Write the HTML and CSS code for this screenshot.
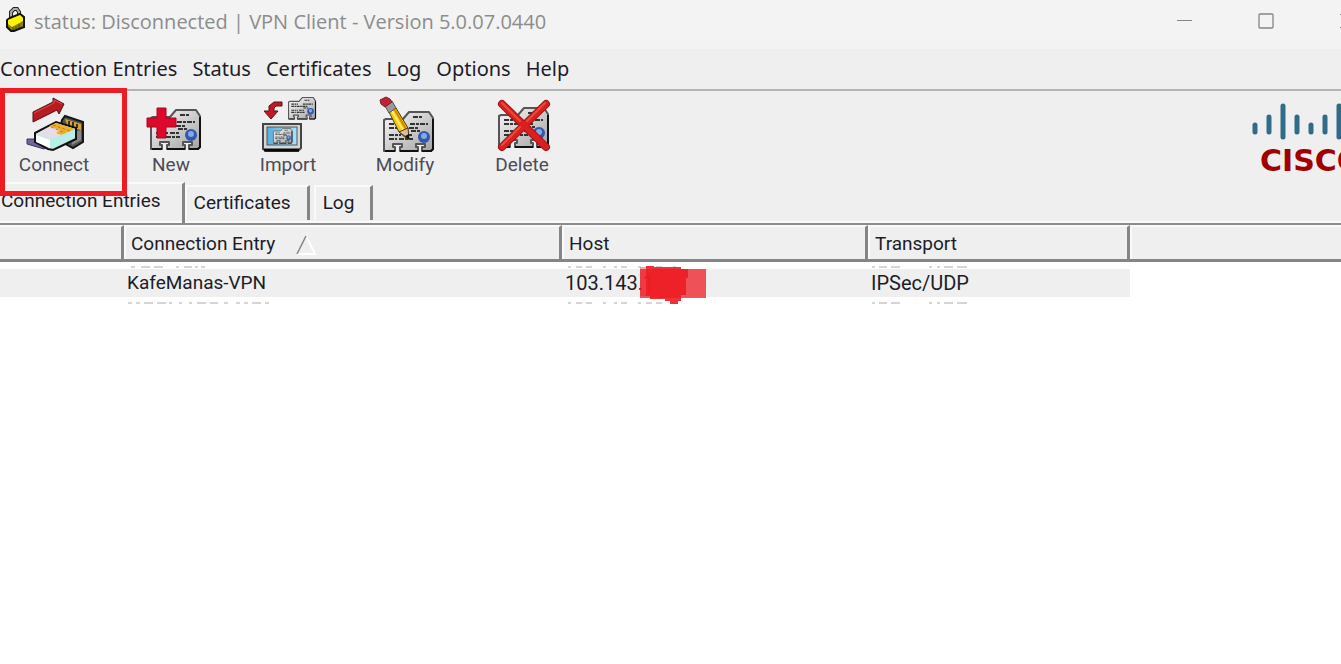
FILE: index.html
```html
<!DOCTYPE html>
<html lang="en">
<head>
  <meta charset="UTF-8" />
  <meta name="viewport" content="width=device-width, initial-scale=1.0" />
  <title>VPN Client</title>
  <link rel="stylesheet" href="styles.css">
</head>
<body>

  <!-- Shared shapes -->
  <svg class="defs" width="0" height="0">
    <defs>
      <linearGradient id="paper" x1="0" y1="0" x2="1" y2="1">
        <stop offset="0" stop-color="#fafafa" />
        <stop offset="1" stop-color="#a2a2a2" />
      </linearGradient>
      <linearGradient id="screen">
        <stop offset="0" stop-color="#55aee0" />
        <stop offset="1" stop-color="#a8e2fa" />
      </linearGradient>
      <g id="card">
        <path d="M1 9L3 8H20L26 1H46L50 7V38L48 40H39V36H42V33H33V36H35V40H17V36H19V33H10V36H12V40H1Z" fill="url(#paper)" stroke="#555" stroke-width="2" stroke-linejoin="round" />
        <path d="M50 8V38L48 40H39M35 40H17M12 40H2" fill="none" stroke="#111" stroke-width="2" />
        <path d="M30 6H39M6 13H18M27 13H45M6 17H35M28 20H37M6 24H18M20 24H30M6 28H14M16 28H30" fill="none" stroke="#333" stroke-width="2" stroke-dasharray="5 1 3 1" />
        <circle cx="41" cy="26" r="6" fill="#3158b0" />
        <circle cx="41" cy="25" r="3" fill="#86a8e4" />
      </g>
    </defs>
  </svg>

  <header class="titlebar">
    <svg class="lock" width="22" height="26" viewBox="0 0 22 26">
      <path d="M6 11V5L9 2H12L14 5V9" fill="none" stroke="#222" stroke-width="4" />
      <path d="M6 11V5L9 2H12L14 5V9" fill="none" stroke="#aaa" stroke-width="2" />
      <path d="M2 13L5 11L15 7L19 10V20L9 24H6L2 20Z" fill="#8a8400" stroke="#111" stroke-width="2" />
      <path d="M3 13L15 8L18 11V14L7 20L3 17Z" fill="#fff200" />
      <path d="M8 20V23M11 19V22M14 17V21" stroke="#4c4800" />
    </svg>
    <h1 class="window-title">status: Disconnected | VPN Client - Version 5.0.07.0440</h1>
    <div class="window-controls">
      <button aria-label="Minimize"><svg width="16" height="16"><path d="M0 7.5H15" stroke="#858585" /></svg></button>
      <button aria-label="Maximize"><svg width="16" height="16"><rect x="1" y="1" width="14" height="14" rx="1" fill="none" stroke="#858585" stroke-width="1.3" /></svg></button>
      <button aria-label="Close"><svg width="16" height="16"><path d="M1 1L15 15M15 1L1 15" stroke="#858585" /></svg></button>
    </div>
  </header>

  <nav class="menubar">
    <button>Connection Entries</button>
    <button>Status</button>
    <button>Certificates</button>
    <button>Log</button>
    <button>Options</button>
    <button>Help</button>
  </nav>

  <div class="toolbar">
    <button class="tool">
      <svg width="64" height="56" viewBox="0 0 64 56">
        <path d="M40 24L43 20L61 26V46L51 52L42 47L38 34Z" fill="#555" stroke="#161616" stroke-width="2" />
        <path d="M43 23L59 28V34L46 31Z" fill="#dda034" />
        <path d="M47 25V30M51 26V31M55 28V32" stroke="#333" stroke-width="2" />
        <path d="M49 37L59 34V44L50 49Z" fill="#888" />
        <path d="M5 43H17L28 49L22 53L5 48Z" fill="#70659d" stroke="#3f385f" />
        <path d="M13 37L34 26L54 32V43L31 54L26 53L13 46Z" fill="#b7eee6" stroke="#111" stroke-width="2" />
        <path d="M14 38L34 27L53 33L29 43Z" fill="#e8dce7" />
        <path d="M14 39L28 44V52L14 46Z" fill="#fff" />
        <path d="M27 30L34 27L53 33L39 39L34 37L38 34Z" fill="#f0ae26" />
        <path d="M31 29L48 35M29 31L43 37" stroke="#b97e15" stroke-dasharray="3 2" />
        <path d="M11 16L31 6V2L42 8L37 18L35 14L11 26Z" fill="#b81b20" stroke="#511115" stroke-width="1" />
        <path d="M12 17L32 7V4L40 8" fill="none" stroke="#e24b4b" stroke-width="1" />
      </svg>
      <span>Connect</span>
    </button>
    <button class="tool">
      <svg width="64" height="56" viewBox="0 0 64 56">
        <use href="#card" x="11" y="13" />
        <path d="M18 12H27V22H37V31H27V42H18V31H8V22H18Z" fill="#dc092b" stroke="#a60824" />
      </svg>
      <span>New</span>
    </button>
    <button class="tool">
      <svg width="64" height="56" viewBox="0 0 64 56">
        <path d="M26 6H18L13 10V15H8L15 23L22 15H18V12L20 10H26Z" fill="#c31824" stroke="#57121a" />
        <use href="#card" transform="translate(32 1) scale(.55)" />
        <path d="M7 28H45V52L42 55H10L7 53Z" fill="#d7d7d7" stroke="#444" stroke-width="2" />
        <path d="M8 54H43" stroke="#080808" stroke-width="3" />
        <rect x="11" y="31" width="30" height="18" fill="url(#screen)" stroke="#555" stroke-width="1" />
        <use href="#card" transform="translate(17 32) scale(.38)" />
      </svg>
      <span>Import</span>
    </button>
    <button class="tool">
      <svg width="64" height="56" viewBox="0 0 64 56">
        <use href="#card" x="10" y="15" />
        <path d="M16 16L23 12L35 32L34 43L26 36Z" fill="#f8c510" stroke="#4b3b0b" />
        <path d="M19 15L30 34" stroke="#fff064" stroke-width="2" />
        <path d="M22 14L33 33" stroke="#d38a00" stroke-width="2" />
        <path d="M26 36L35 32L36 43Z" fill="#e3bd91" stroke="#443728" />
        <path d="M32 40L36 38V44Z" fill="#111" />
        <path d="M12 10L19 5L23 12L16 17Z" fill="#999" stroke="#555" />
        <path d="M7 4L13 1L17 3L19 6L12 11L8 8Z" fill="#bd2437" stroke="#801c2a" />
      </svg>
      <span>Modify</span>
    </button>
    <button class="tool">
      <svg width="64" height="56" viewBox="0 0 64 56">
        <use href="#card" x="8" y="11" />
        <path d="M12 8L56 51M56 8L12 51" stroke="#9f1218" stroke-width="8" stroke-linecap="round" />
        <path d="M12 8L56 51M56 8L12 51" stroke="#d9201f" stroke-width="6" stroke-linecap="round" />
        <path d="M12 7L30 25M55 7L37 25M30 31L12 49" stroke="#ea4a3e" stroke-width="2" stroke-linecap="round" />
      </svg>
      <span>Delete</span>
    </button>

    <div class="brand">
      <svg width="120" height="38" viewBox="0 0 120 38">
        <path d="M3 22V29M17 14V29M31 3V34M45 14V29M59 22V29M73 14V29M87 3V34M101 14V29M115 22V29" stroke="#306c87" stroke-width="5" stroke-linecap="round" />
      </svg>
      <span>CISCO</span>
    </div>

    <div class="highlight"></div>
  </div>

  <div class="tabs" role="tablist">
    <button class="tab active" role="tab" aria-selected="true">Connection Entries</button>
    <button class="tab" role="tab">Certificates</button>
    <button class="tab" role="tab">Log</button>
  </div>

  <table class="entries">
    <colgroup>
      <col class="col-icon">
      <col class="col-name">
      <col class="col-host">
      <col class="col-transport">
      <col>
    </colgroup>
    <thead>
      <tr>
        <th></th>
        <th>Connection Entry
          <svg class="sort" width="20" height="20" viewBox="0 0 20 20"><path d="M1 19H19L10 1" fill="none" stroke="#fff" stroke-width="2" /><path d="M1 19L10 1" stroke="#858585" stroke-width="1.5" /></svg>
        </th>
        <th>Host</th>
        <th>Transport</th>
        <th></th>
      </tr>
    </thead>
    <tbody>
      <!-- rows scrolled almost out of sight -->
      <tr class="sliver">
        <td></td>
        <td><svg width="80" height="2"><path d="M4 1H80" stroke-dasharray="4 6 9 4 9 13 3 5 8 3 3 3" /></svg></td>
        <td><svg width="116" height="2"><path d="M3 1H116" stroke-dasharray="3 5 6 4 6 11 3 8 3 4 6 11" /></svg></td>
        <td><svg width="99" height="2"><path d="M1 1H99" stroke-dasharray="3 4 8 4 9 29 3 5 3 4 9 4 10 9" /></svg></td>
        <td></td>
      </tr>
      <tr class="row">
        <td></td>
        <td>KafeManas-VPN</td>
        <td class="host">103.143.1
          <svg class="scribble" width="68" height="40" viewBox="0 0 68 40">
            <path d="M1 4H67V33H1Z" fill="#ed1c24" opacity=".75" />
            <path d="M7 1H15V2H42V4H49V13H47V30H42V36H39V39H31V36H26V34H11V31H7Z" fill="#ed1c24" opacity=".9" />
            <path d="M1 2H7V31H1Z" fill="#ed1c24" opacity=".4" />
          </svg>
        </td>
        <td>IPSec/UDP</td>
        <td></td>
      </tr>
      <tr class="sliver last">
        <td></td>
        <td><svg width="142" height="2"><path d="M1 1H142" stroke-dasharray="4 4 4 4 9 4 9 3 3 7 3 7 3 5 9 4 8 6 4 8" /></svg></td>
        <td><svg width="116" height="2"><path d="M3 1H116" stroke-dasharray="3 5 6 4 6 11 3 8 3 4 6 11" /></svg></td>
        <td><svg width="99" height="2"><path d="M1 1H99" stroke-dasharray="3 4 8 4 9 29 3 5 3 4 9 4 10 9" /></svg></td>
        <td></td>
      </tr>
    </tbody>
  </table>

</body>
</html>
```
FILE: styles.css
```css
* {
  box-sizing: border-box;
}

body {
  margin: 0;
  background: #fff;
  color: #1c1c28;
  font-family: Roboto, "Liberation Sans", sans-serif;
  font-size: 19px;
  line-height: 24px;
}

button {
  margin: 0;
  padding: 0;
  border: none;
  background: none;
  color: inherit;
  font: inherit;
  white-space: nowrap;
}

svg {
  display: block;
  flex: none;
}

.defs {
  position: absolute;
}

.titlebar {
  display: flex;
  height: 49px;
  padding-left: 5px;
  background: #f3f3f3;
  overflow: hidden;
}

.lock {
  margin-top: 7px;
}

.window-title {
  margin: 8px 0 0 7px;
  color: #8c8c8c;
  font-family: "Open Sans", sans-serif;
  font-size: 20px;
  font-weight: 400;
  line-height: 28px;
  white-space: nowrap;
}

.window-controls {
  display: flex;
  height: 41px;
  margin-left: auto;
  margin-right: -46px;
}

.window-controls button {
  display: flex;
  align-items: center;
  justify-content: center;
  width: 81px;
}

.menubar {
  display: flex;
  align-items: center;
  gap: 15px;
  height: 40px;
  background: #efefef;
  font-family: "Noto Sans", sans-serif;
  font-size: 20px;
}

.toolbar {
  position: relative;
  display: flex;
  gap: 9px;
  height: 93px;
  padding-top: 5px;
  border-top: 2px solid #b4b4b4;
  background: #efefef;
}

.tool {
  display: flex;
  flex-direction: column;
  align-items: center;
  width: 108px;
  color: #4c4c55;
}

.tool span {
  margin-top: 1px;
}

.brand {
  width: 89px;
  margin-left: auto;
  padding-top: 7px;
  overflow: hidden;
  color: #a00000;
  font-family: "DejaVu Sans", sans-serif;
  font-size: 30px;
  font-weight: 700;
  line-height: 40px;
}

.brand span {
  display: block;
  padding-left: 8px;
}

/* red frame drawn over the Connect button */
.highlight {
  position: absolute;
  z-index: 1;
  top: -3px;
  left: 0;
  width: 127px;
  height: 108px;
  border: 5px solid #ed1c24;
}

.tabs {
  display: flex;
  align-items: flex-end;
  height: 43px;
  border-bottom: 2px solid #8c8c8c;
  background: #efefef;
  box-shadow: inset 0 -2px #fafafa;
}

.tab {
  height: 35px;
  margin: 0 4px 3px 0;
  padding: 0 16px 2px 7px;
  border-top: 2px solid #fafafa;
  border-left: 2px solid #fafafa;
  border-right: 3px solid #858585;
}

.tab.active {
  height: 41px;
  margin: 0;
  padding: 0 21px 6px 1px;
  border-left: none;
}

.entries {
  width: 100%;
  table-layout: fixed;
  border-collapse: separate;
  border-spacing: 0;
}

.col-icon {
  width: 124px;
}

.col-name {
  width: 438px;
}

.col-host {
  width: 306px;
}

.col-transport {
  width: 262px;
}

.entries th {
  height: 37px;
  padding: 2px 7px 0;
  border-top: 2px solid #fafafa;
  border-right: 3px solid #858585;
  border-bottom: 3px solid #858585;
  background: #efefef;
  box-shadow: inset 2px 0 #fafafa;
  font-weight: 400;
  text-align: left;
  white-space: nowrap;
}

.entries th:first-child {
  box-shadow: none;
}

.entries th:last-child {
  border-right: none;
}

.sort {
  display: inline-block;
  margin-left: 16px;
  vertical-align: middle;
}

.entries td {
  padding: 0 3px;
}

.row td {
  height: 28px;
  background: #efefef;
  font-size: 20px;
  white-space: nowrap;
}

.row td:first-child + td {
  font-size: 19px;
}

.row td:last-child {
  background: none;
}

.host {
  position: relative;
}

/* marker strokes over the rest of the address */
.scribble {
  position: absolute;
  top: -4px;
  left: 77px;
}

.sliver td {
  height: 7px;
  padding-top: 3px;
}

.sliver.last td {
  padding-top: 4px;
}

.sliver svg {
  fill: none;
  stroke: #aaa;
  stroke-width: 1;
}
```
